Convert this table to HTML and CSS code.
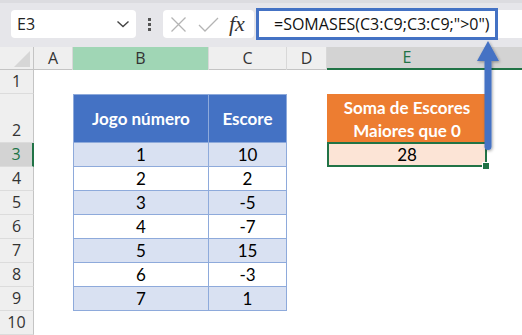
FILE: index.html
```html
<!DOCTYPE html>
<html lang="pt">
<head>
  <meta charset="UTF-8">
  <title>SOMASES - escores maiores que 0</title>
  <link rel="stylesheet" href="styles.css">
</head>
<body>
  <div class="toolbar">
    <div class="namebox">
      <span>E3</span>
      <svg class="chevron" width="14" height="8" viewBox="0 0 14 8"><path d="M1.5 1.5l5.5 5 5.5-5" fill="none" stroke="#444" stroke-width="1.4"/></svg>
    </div>
    <div class="grip"><i></i><i></i><i></i></div>
    <div class="fxbox">
      <svg class="icon" width="17" height="17" viewBox="0 0 17 17"><path d="M1.5 1.5l14 14M15.5 1.5l-14 14" stroke="#b4b4b4" stroke-width="1.3"/></svg>
      <svg class="icon icon-ok" width="21" height="15" viewBox="0 0 21 15"><path d="M1 8l6 6L20 1" fill="none" stroke="#b4b4b4" stroke-width="1.3"/></svg>
      <span class="fx">fx</span>
    </div>
    <div class="formulabar">
      <div class="formula">=SOMASES(C3:C9;C3:C9;"&gt;0")</div>
    </div>
  </div>

  <div class="sheet">
    <div class="row colheads">
      <div class="corner"><span></span></div>
      <div class="ch">A</div>
      <div class="ch ch-b">B</div>
      <div class="ch">C</div>
      <div class="ch">D</div>
      <div class="ch ch-active">E</div>
      <div class="ch ch-active ch-last"></div>
    </div>

    <div class="row">
      <div class="rh">1</div>
      <div></div><div></div><div></div><div></div><div></div><div></div>
    </div>

    <div class="row tall">
      <div class="rh">2</div>
      <div></div>
      <div class="th th-first">Jogo número</div>
      <div class="th">Escore</div>
      <div></div>
      <div class="total-head">Soma de Escores<br>Maiores que 0</div>
      <div></div>
    </div>

    <div class="row">
      <div class="rh rh-active">3</div>
      <div></div>
      <div class="td td-first band">1</div>
      <div class="td band">10</div>
      <div></div>
      <div class="total">28</div>
      <div></div>
    </div>

    <div class="row">
      <div class="rh">4</div>
      <div></div>
      <div class="td td-first">2</div>
      <div class="td">2</div>
      <div></div><div></div><div></div>
    </div>

    <div class="row">
      <div class="rh">5</div>
      <div></div>
      <div class="td td-first band">3</div>
      <div class="td band">-5</div>
      <div></div><div></div><div></div>
    </div>

    <div class="row">
      <div class="rh">6</div>
      <div></div>
      <div class="td td-first">4</div>
      <div class="td">-7</div>
      <div></div><div></div><div></div>
    </div>

    <div class="row">
      <div class="rh">7</div>
      <div></div>
      <div class="td td-first band">5</div>
      <div class="td band">15</div>
      <div></div><div></div><div></div>
    </div>

    <div class="row">
      <div class="rh">8</div>
      <div></div>
      <div class="td td-first">6</div>
      <div class="td">-3</div>
      <div></div><div></div><div></div>
    </div>

    <div class="row">
      <div class="rh">9</div>
      <div></div>
      <div class="td td-first band">7</div>
      <div class="td band">1</div>
      <div></div><div></div><div></div>
    </div>

    <div class="row">
      <div class="rh">10</div>
      <div></div><div></div><div></div><div></div><div></div><div></div>
    </div>
  </div>

  <!-- seta ligando a fórmula à célula E3 -->
  <svg class="arrow" width="30" height="120" viewBox="0 0 30 120">
    <defs>
      <filter id="sombra" x="-50%" y="-10%" width="200%" height="120%">
        <feDropShadow dx="1" dy="1" stdDeviation="1.5" flood-color="#000" flood-opacity="0.35"/>
      </filter>
    </defs>
    <g fill="#4472c4" filter="url(#sombra)">
      <rect x="10.5" y="18" width="7" height="94" rx="3.5"/>
      <polygon points="14,3 3,23 25,23"/>
    </g>
  </svg>
</body>
</html>
```

FILE: styles.css
```css
body {
  margin: 0;
  width: 522px;
  height: 335px;
  overflow: hidden;
  position: relative;
  background: #fff;
  font-family: 'Open Sans', sans-serif;
  color: #222;
}

/* barra de fórmulas */
.toolbar {
  height: 47px;
  box-sizing: border-box;
  padding: 7px 0 0 11px;
  display: flex;
  align-items: flex-start;
  background: #e6e6ea;
  border-top: 3px solid #dcdce0;
}
.namebox {
  width: 125px;
  height: 28px;
  box-sizing: border-box;
  padding: 0 6px;
  background: #fff;
  border-radius: 4px;
  display: flex;
  align-items: center;
  justify-content: space-between;
  font-size: 16px;
  color: #222;
}
.grip {
  margin: 8px 0 0 12px;
  width: 3px;
  display: flex;
  flex-direction: column;
  gap: 2px;
}
.grip i {
  width: 3px;
  height: 3px;
  background: #555;
}
.fxbox {
  margin-left: 12px;
  width: 91px;
  height: 28px;
  box-sizing: border-box;
  padding-left: 7px;
  background: #fff;
  border-radius: 4px;
  display: flex;
  align-items: center;
}
.icon-ok {
  margin-left: 11px;
}
.fx {
  margin-left: 10px;
  font-family: 'Liberation Serif', serif;
  font-style: italic;
  font-size: 22px;
  color: #333;
}
.formulabar {
  margin-left: 2px;
  flex: 1;
  height: 28px;
  background: #fff;
  border-radius: 4px 0 0 4px;
}
.formula {
  width: 242px;
  height: 32px;
  margin-top: -2px;
  box-sizing: border-box;
  border: 3px solid #4472c4;
  padding-left: 15px;
  line-height: 26px;
  font-size: 16px;
  color: #111;
  white-space: nowrap;
}

/* planilha */
.row {
  display: grid;
  grid-template-columns: 34px 39px 136px 78px 40px 160px 1fr;
  height: 24px;
}
.row.tall {
  height: 49px;
}
.colheads {
  height: 23px;
  background: #efefef;
  border-bottom: 1px solid #c4c4c4;
  box-sizing: border-box;
}
.corner {
  border-right: 1px solid #c4c4c4;
  position: relative;
}
.corner span {
  position: absolute;
  right: 3px;
  bottom: 3px;
  width: 0;
  height: 0;
  border-left: 16px solid transparent;
  border-bottom: 16px solid #d6d6d6;
}
.ch {
  border-right: 1px solid #d8d8d8;
  text-align: center;
  font-size: 16px;
  line-height: 22px;
  color: #333;
}
.ch-b {
  background: #a0d6b5;
}
.ch-active {
  background: #d3d3d3;
  color: #217346;
  border-right: none;
  border-bottom: 2px solid #217346;
  line-height: 21px;
}
.rh {
  background: #efefef;
  border-right: 1px solid #c4c4c4;
  border-bottom: 1px solid #dcdcdc;
  font-size: 16px;
  color: #333;
  display: flex;
  align-items: flex-end;
  justify-content: center;
  padding-bottom: 1px;
}
.rh-active {
  background: #d3d3d3;
  color: #217346;
  border-right: 2px solid #217346;
}

/* tabela de escores */
.th, .td, .total-head, .total {
  font-family: Lato, sans-serif;
  font-size: 17px;
  display: flex;
  align-items: center;
  justify-content: center;
  box-sizing: border-box;
}
.th {
  background: #4472c4;
  color: #fff;
  font-weight: bold;
  border-top: 1px solid #8eaadb;
  border-right: 1px solid #8eaadb;
  border-bottom: 1px solid #8eaadb;
}
.th-first, .td-first {
  border-left: 1px solid #8eaadb;
}
.td {
  color: #000;
  border-right: 1px solid #8eaadb;
  border-bottom: 1px solid #8eaadb;
}
.td.band {
  background: #d9e1f2;
}
.total-head {
  background: #ed7d31;
  color: #fff;
  font-weight: bold;
  text-align: center;
  line-height: 23px;
}
.total {
  position: relative;
  background: #fce4d6;
  color: #000;
  border: 2px solid #217346;
  margin-top: -1px;
}
.total::after {
  content: '';
  position: absolute;
  right: -5px;
  bottom: -5px;
  width: 6px;
  height: 6px;
  background: #217346;
  border: 1px solid #fff;
}

.arrow {
  position: absolute;
  left: 474px;
  top: 38px;
}
```
